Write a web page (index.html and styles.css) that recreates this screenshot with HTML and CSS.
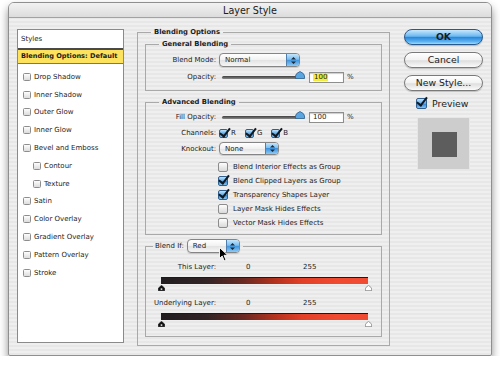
FILE: index.html
```html
<!DOCTYPE html>
<html lang="en">
<head>
    <meta charset="utf-8">
    <title>Layer Style</title>
    <link rel="stylesheet" href="styles.css">
</head>
<body>
<div class="window">
    <div class="titlebar">Layer Style</div>

    <div class="content">
        <!-- left list of effects -->
        <div class="styles-list">
            <div class="list-head">Styles</div>
            <div class="list-sel">Blending Options: Default</div>
            <div class="list-item"><span class="box"></span>Drop Shadow</div>
            <div class="list-item"><span class="box"></span>Inner Shadow</div>
            <div class="list-item"><span class="box"></span>Outer Glow</div>
            <div class="list-item"><span class="box"></span>Inner Glow</div>
            <div class="list-item"><span class="box"></span>Bevel and Emboss</div>
            <div class="list-item sub"><span class="box"></span>Contour</div>
            <div class="list-item sub"><span class="box"></span>Texture</div>
            <div class="list-item"><span class="box"></span>Satin</div>
            <div class="list-item"><span class="box"></span>Color Overlay</div>
            <div class="list-item"><span class="box"></span>Gradient Overlay</div>
            <div class="list-item"><span class="box"></span>Pattern Overlay</div>
            <div class="list-item"><span class="box"></span>Stroke</div>
        </div>

        <fieldset class="group main">
            <legend>Blending Options</legend>

            <fieldset class="group general">
                <legend>General Blending</legend>
                <div class="row r-mode">
                    <span class="lbl">Blend Mode:</span>
                    <span class="popup w-mode"><span class="pop-text">Normal</span><span class="cap"><svg width="7" height="9" viewBox="0 0 7 9"><path d="M3.5 1 L6 3.6 L1 3.6 Z M1 5.4 L6 5.4 L3.5 8 Z" fill="#1b2a3a"/></svg></span></span>
                </div>
                <div class="row r-opacity">
                    <span class="lbl">Opacity:</span>
                    <span class="slider"><span class="track"></span><svg class="thumb" width="10" height="8" viewBox="0 0 10 8"><path d="M5 0.5 Q9.5 2.5 9.5 5 L9.5 7.5 L0.5 7.5 L0.5 5 Q0.5 2.5 5 0.5 Z" fill="#5aa6e0" stroke="#2b5d8c" stroke-width="0.8"/></svg></span>
                    <span class="num"><span class="hl">100</span></span>
                    <span class="pct">%</span>
                </div>
            </fieldset>

            <fieldset class="group advanced">
                <legend>Advanced Blending</legend>
                <div class="row r-fill">
                    <span class="lbl">Fill Opacity:</span>
                    <span class="slider"><span class="track"></span><svg class="thumb" width="10" height="8" viewBox="0 0 10 8"><path d="M5 0.5 Q9.5 2.5 9.5 5 L9.5 7.5 L0.5 7.5 L0.5 5 Q0.5 2.5 5 0.5 Z" fill="#5aa6e0" stroke="#2b5d8c" stroke-width="0.8"/></svg></span>
                    <span class="num">100</span>
                    <span class="pct">%</span>
                </div>
                <div class="row r-channels">
                    <span class="lbl">Channels:</span>
                    <span class="chan"><span class="check on"></span>R</span>
                    <span class="chan"><span class="check on"></span>G</span>
                    <span class="chan"><span class="check on"></span>B</span>
                </div>
                <div class="row r-knock">
                    <span class="lbl">Knockout:</span>
                    <span class="popup w-knock"><span class="pop-text">None</span><span class="cap"><svg width="7" height="9" viewBox="0 0 7 9"><path d="M3.5 1 L6 3.6 L1 3.6 Z M1 5.4 L6 5.4 L3.5 8 Z" fill="#1b2a3a"/></svg></span></span>
                </div>
                <div class="opts">
                    <div class="opt"><span class="check"></span>Blend Interior Effects as Group</div>
                    <div class="opt"><span class="check on"></span>Blend Clipped Layers as Group</div>
                    <div class="opt"><span class="check on"></span>Transparency Shapes Layer</div>
                    <div class="opt"><span class="check"></span>Layer Mask Hides Effects</div>
                    <div class="opt"><span class="check"></span>Vector Mask Hides Effects</div>
                </div>
            </fieldset>

            <fieldset class="group blendif">
                <legend>
                    <span class="if-label">Blend If:</span>
                    <span class="popup w-if"><span class="pop-text">Red</span><span class="cap"><svg width="7" height="9" viewBox="0 0 7 9"><path d="M3.5 1 L6 3.6 L1 3.6 Z M1 5.4 L6 5.4 L3.5 8 Z" fill="#1b2a3a"/></svg></span>
                        <svg class="cursor" width="10" height="15" viewBox="0 0 10 15"><path d="M0.5 0.5 L0.5 11.5 L3.2 9 L5.2 13.8 L7 13 L5 8.3 L8.7 8.3 Z" fill="#000" stroke="#fff" stroke-width="0.9"/></svg>
                    </span>
                </legend>
                <div class="row r-range first">
                    <span class="lbl">This Layer:</span>
                    <span class="lo">0</span><span class="hi">255</span>
                </div>
                <div class="ramp"></div>
                <div class="markers">
                    <svg width="7" height="6" viewBox="0 0 7 6"><path d="M3.5 0.3 L6.7 3.2 L6.7 5.7 L0.3 5.7 L0.3 3.2 Z" fill="#111" stroke="#111" stroke-width="0.6"/><rect x="2.7" y="3.4" width="1.6" height="1.4" fill="#fff"/></svg>
                    <svg width="7" height="6" viewBox="0 0 7 6"><path d="M3.5 0.3 L6.7 3.2 L6.7 5.7 L0.3 5.7 L0.3 3.2 Z" fill="#fff" stroke="#555" stroke-width="0.6"/></svg>
                </div>
                <div class="row r-range">
                    <span class="lbl">Underlying Layer:</span>
                    <span class="lo">0</span><span class="hi">255</span>
                </div>
                <div class="ramp"></div>
                <div class="markers">
                    <svg width="7" height="6" viewBox="0 0 7 6"><path d="M3.5 0.3 L6.7 3.2 L6.7 5.7 L0.3 5.7 L0.3 3.2 Z" fill="#111" stroke="#111" stroke-width="0.6"/><rect x="2.7" y="3.4" width="1.6" height="1.4" fill="#fff"/></svg>
                    <svg width="7" height="6" viewBox="0 0 7 6"><path d="M3.5 0.3 L6.7 3.2 L6.7 5.7 L0.3 5.7 L0.3 3.2 Z" fill="#fff" stroke="#555" stroke-width="0.6"/></svg>
                </div>
            </fieldset>
        </fieldset>

        <div class="side">
            <div class="btn ok">OK</div>
            <div class="btn">Cancel</div>
            <div class="btn">New Style...</div>
            <div class="preview-row"><span class="check on big"></span>Preview</div>
            <div class="preview-box"><div class="swatch"></div></div>
        </div>
    </div>
</div>
</body>
</html>
```

FILE: styles.css
```css
:root {
    --text: #1c1c1c;
    --line: #a9a9a9;
}

* {
    margin: 0;
    padding: 0;
    box-sizing: border-box;
}

body {
    background: #fff;
    font-family: "DejaVu Sans", sans-serif;
    font-size: 7px;
    color: var(--text);
}

.window {
    width: 484px;
    height: 354px;
    margin: 2px 8px 0;
    border: 1px solid #8f8f8f;
    border-radius: 6px 6px 2px 2px;
    background: repeating-linear-gradient(#efefef 0 2px, #e7e7e7 2px 4px);
    box-shadow: 0 5px 9px rgba(0, 0, 0, 0.45);
    overflow: hidden;
}

.titlebar {
    height: 15px;
    line-height: 15px;
    text-align: center;
    font-size: 9.6px;
    color: #202020;
    border-bottom: 1px solid #a2a2a2;
    background: linear-gradient(#f2f2f2, #dcdcdc);
}

.content {
    display: flex;
    align-items: flex-start;
    padding: 9px 8px 0;
}

/* ---- styles list ---- */
.styles-list {
    width: 107px;
    height: 314px;
    margin-top: 2px;
    background: #fff;
    border: 1px solid #8a8a8a;
}

.list-head {
    height: 20px;
    line-height: 18px;
    padding-left: 3px;
    border-bottom: 2px solid #4a4a4a;
}

.list-sel {
    height: 14px;
    line-height: 13px;
    padding-left: 3px;
    font-weight: bold;
    font-size: 6.6px;
    background: #fde35d;
    border-bottom: 1px solid #8b7a32;
    margin-bottom: 4px;
}

.list-item {
    display: flex;
    align-items: center;
    height: 17.8px;
    padding-left: 5px;
}

.list-item.sub {
    padding-left: 15px;
}

.box {
    width: 8px;
    height: 8px;
    margin-right: 3px;
    border: 1px solid #8d8d8d;
    border-radius: 1.5px;
    background: linear-gradient(#fdfdfd, #dcdcdc);
}

/* ---- group boxes ---- */
.group {
    border: 1px solid var(--line);
    min-width: 0;
}

.group legend {
    margin-left: 6px;
    padding: 0 3px;
    line-height: 10px;
    font-weight: bold;
    font-size: 6.8px;
}

.main {
    width: 253px;
    margin-left: 13px;
    padding: 2px 7px 8px;
}

.general {
    padding: 0 7px 7px;
}

.advanced {
    margin-top: 6px;
    padding: 0 7px 4px;
}

.blendif {
    margin-top: 4px;
    padding: 0 7px 9px;
}

.blendif legend {
    margin-left: 0;
    padding: 0 3px 0 2px;
    display: flex;
    align-items: center;
    font-weight: normal;
    font-size: 7px;
}

.if-label {
    margin-right: 3px;
}

.row {
    display: flex;
    align-items: center;
}

.lbl {
    width: 63px;
    margin-right: 3px;
    text-align: right;
    white-space: nowrap;
}

.r-mode { margin-top: 4px; height: 14px; }
.r-opacity { margin-top: 4px; height: 12px; }
.r-fill { margin-top: 4px; height: 12px; }
.r-channels { margin-top: 4px; height: 12px; }
.r-knock { margin-top: 3px; height: 13px; }

/* popup menus */
.popup {
    position: relative;
    display: flex;
    height: 14px;
    border: 1px solid #858585;
    border-radius: 4px;
    background: linear-gradient(#ffffff, #f1f1f1 50%, #e2e2e2 51%, #f6f6f6);
    box-shadow: 0 1px 1px rgba(0, 0, 0, 0.15);
}

.r-knock .popup { height: 13px; }

.pop-text {
    flex: 1;
    padding-left: 5px;
    line-height: 12px;
}

.cap {
    width: 13px;
    display: flex;
    align-items: center;
    justify-content: center;
    border-radius: 0 3px 3px 0;
    border-left: 1px solid #4f7fae;
    background: linear-gradient(#c4e6fc, #79bdf0 45%, #3f93dc 50%, #8ccaf6);
}

.w-mode { width: 81px; }
.w-knock { width: 60px; }
.w-if { width: 53px; }

.cursor {
    position: absolute;
    left: 31px;
    top: 7px;
}

/* sliders */
.slider {
    width: 86px;
    display: flex;
    align-items: center;
    margin-right: 4px;
}

.track {
    flex: 1;
    height: 3px;
    margin-left: 3px;
    border-radius: 2px;
    background: linear-gradient(#3e3e3e, #8a8a8a);
}

.thumb {
    margin-left: -2px;
    margin-top: -4px;
}

.num {
    width: 35px;
    height: 11px;
    line-height: 9px;
    padding-left: 3px;
    background: #fff;
    border: 1px solid #8e8e8e;
    box-shadow: inset 0 1px 1px rgba(0, 0, 0, 0.2);
}

.hl {
    background: #f6ea3c;
    padding: 0 1px;
}

.pct {
    margin-left: 3px;
}

/* checkboxes */
.check {
    width: 10px;
    height: 10px;
    border: 1px solid #8c8c8c;
    border-radius: 2px;
    background: linear-gradient(#fefefe, #d9d9d9);
    position: relative;
}

.check.on {
    border-color: #2f5f8e;
    background: linear-gradient(#bfe2fb, #5eaae9 50%, #2f86d6 55%, #86c6f4);
}

.check.on::after {
    content: "";
    position: absolute;
    left: 2px;
    top: -4px;
    width: 4px;
    height: 9px;
    border: solid #101820;
    border-width: 0 2px 2px 0;
    transform: rotate(38deg);
}

.check.big {
    width: 11px;
    height: 11px;
}

.chan {
    display: flex;
    align-items: center;
    margin-right: 9px;
}

.chan .check {
    width: 9px;
    height: 9px;
    margin-right: 3px;
}

.opts {
    margin-top: 5px;
    margin-left: 65px;
}

.opt {
    display: flex;
    align-items: center;
    height: 14px;
}

.opt .check {
    margin-right: 5px;
}

/* blend-if ramps */
.r-range {
    height: 10px;
    margin-top: 7px;
}

.r-range.first {
    margin-top: 9px;
}

.lo {
    margin-left: 27px;
    width: 57px;
}

.ramp {
    width: 207px;
    height: 7px;
    margin: 5px 0 0 8px;
    border-top: 1px solid #1a1a1a;
    background: linear-gradient(to right, #211d20 0%, #332426 22%, #6a2a22 40%, #b3321d 55%, #e23f27 68%, #f04a31 85%, #f14c33 100%);
}

.markers {
    display: flex;
    justify-content: space-between;
    width: 214px;
    height: 6px;
    margin: 1px 0 0 5px;
}

.markers svg {
    display: block;
}

/* right column */
.side {
    width: 79px;
    margin-left: 14px;
    margin-top: 2px;
    display: flex;
    flex-direction: column;
}

.btn {
    height: 16px;
    line-height: 14px;
    text-align: center;
    font-size: 9.3px;
    border: 1px solid #7a7a7a;
    border-radius: 8px;
    background: linear-gradient(#ffffff, #f2f2f2 50%, #dedede 55%, #fbfbfb);
    box-shadow: 0 1px 1px rgba(0, 0, 0, 0.2);
    margin-bottom: 7px;
}

.btn.ok {
    font-weight: bold;
    border-color: #29588c;
    background: linear-gradient(#c7e7fd, #6ab8f0 45%, #2a86d9 52%, #5fb6f4 85%, #a8dafc);
}

.preview-row {
    display: flex;
    align-items: center;
    height: 12px;
    margin: -1px 0 0 12px;
    font-size: 9.4px;
}

.preview-row .check {
    margin-right: 5px;
}

.preview-box {
    width: 53px;
    height: 53px;
    margin: 8px 0 0 13px;
    padding: 14px;
    background: #cdcdcd;
    border: 1px solid #e6e6e6;
}

.swatch {
    width: 25px;
    height: 25px;
    background: #5d5d5d;
}
```
